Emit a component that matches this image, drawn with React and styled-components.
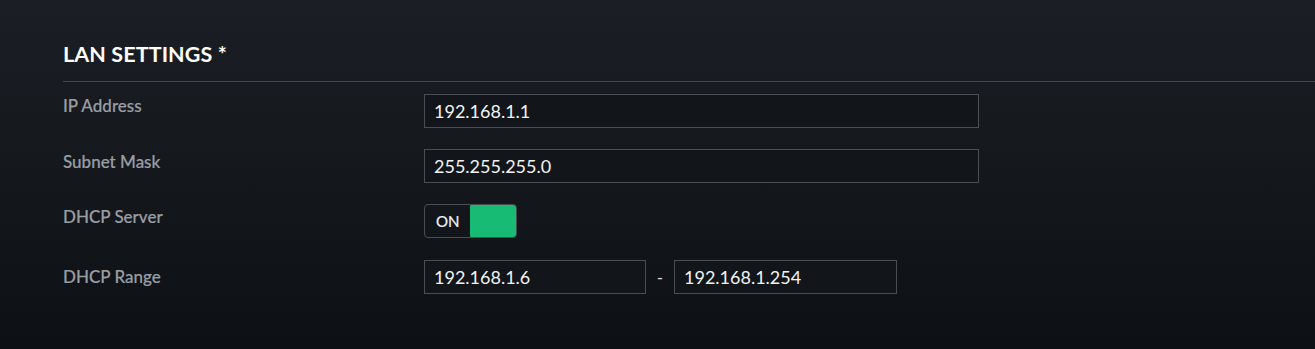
import React from "react";
import styled, { createGlobalStyle } from "styled-components";

const Global = createGlobalStyle`
  html, body { margin: 0; padding: 0; }
  body {
    background: #0d1014;
    font-family: Lato, "Open Sans", sans-serif;
  }
`;

const Page = styled.div`
  min-height: 349px;
  box-sizing: border-box;
  background: linear-gradient(180deg, #1b1e24 0%, #15181d 45%, #0d1014 100%);
  padding: 40px 0 0 63px;
`;

const Title = styled.h2`
  margin: 0;
  font-family: Lato, sans-serif;
  font-weight: 700;
  font-size: 21.5px;
  line-height: 28px;
  color: #ffffff;
  letter-spacing: 0.1px;
  padding-bottom: 13px;
  border-bottom: 1px solid #43474c;
`;

const Form = styled.div`
  display: grid;
  grid-template-columns: 361px auto;
  row-gap: 21px;
  margin-top: 12px;
  justify-content: start;
  align-items: start;
`;

const Label = styled.div`
  font-size: 17px;
  font-weight: 500;
  line-height: 20px;
  color: #999ea4;
  -webkit-text-stroke: 0.2px #999ea4;
  padding-top: ${(p) => p.$offset || 3}px;
`;

const Input = styled.input`
  box-sizing: border-box;
  width: ${(p) => p.$w}px;
  height: 34px;
  margin: 0;
  padding: 0 0 0 9px;
  background: #12161a;
  border: 1px solid #4a4e53;
  border-radius: 0;
  color: #f2f3f4;
  font-family: Lato, sans-serif;
  font-size: 18px;
  outline: none;
`;

const Toggle = styled.div`
  box-sizing: border-box;
  width: 93px;
  height: 34px;
  border: 1px solid #4a4e53;
  border-radius: 4px;
  display: flex;
  align-items: stretch;
  overflow: hidden;
`;

const ToggleText = styled.span`
  flex: 1;
  display: flex;
  align-items: center;
  padding-left: 11px;
  font-size: 15px;
  color: #f2f3f4;
  -webkit-text-stroke: 0.2px #f2f3f4;
`;

const ToggleKnob = styled.span`
  width: 47px;
  margin: -1px -1px -1px 0;
  background: #17bb73;
  border-radius: 3px;
`;

const Range = styled.div`
  display: flex;
  align-items: center;
  padding-top: 1px;
`;

const Dash = styled.span`
  width: 28px;
  text-align: center;
  color: #d8dadc;
  font-size: 17px;
`;

export default function App() {
  return (
    <>
      <Global />
      <Page>
        <Title>LAN SETTINGS *</Title>
        <Form>
          <Label $offset={2}>IP Address</Label>
          <Input $w={555} defaultValue="192.168.1.1" />
          <Label>Subnet Mask</Label>
          <Input $w={555} defaultValue="255.255.255.0" />
          <Label>DHCP Server</Label>
          <Toggle>
            <ToggleText>ON</ToggleText>
            <ToggleKnob />
          </Toggle>
          <Label $offset={8}>DHCP Range</Label>
          <Range>
            <Input $w={222} defaultValue="192.168.1.6" />
            <Dash>-</Dash>
            <Input $w={223} defaultValue="192.168.1.254" />
          </Range>
        </Form>
      </Page>
    </>
  );
}
